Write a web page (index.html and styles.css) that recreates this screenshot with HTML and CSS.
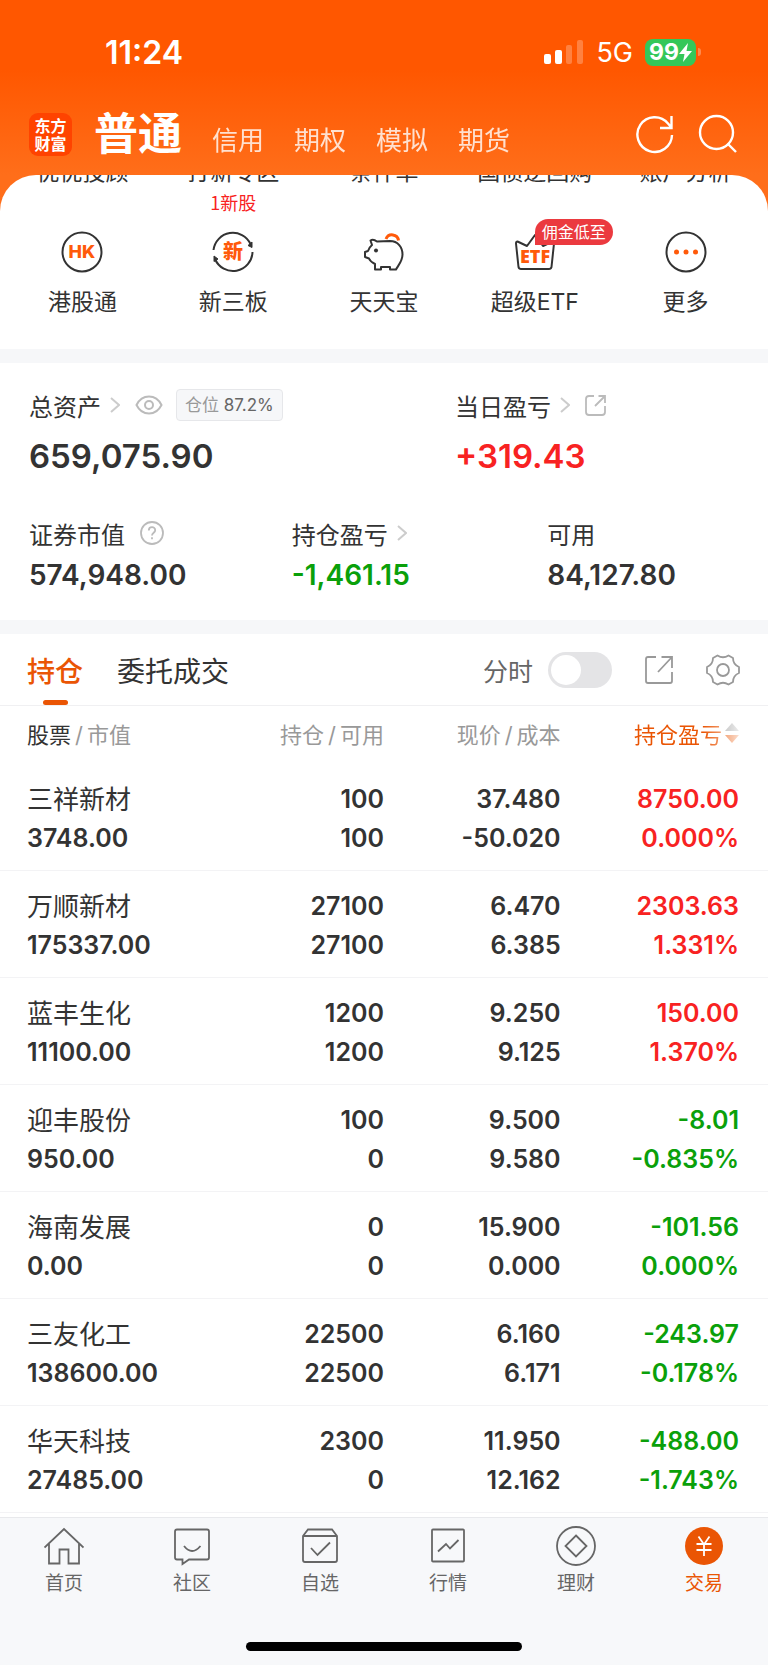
FILE: index.html
```html
<!DOCTYPE html>
<html lang="zh-CN">
<head>
  <meta charset="UTF-8" />
  <meta name="viewport" content="width=device-width, initial-scale=1.0"/>
  <title>交易 - 东方财富</title>
  <link rel="stylesheet" href="styles.css">
</head>
<body>

  <header>
    <div class="status-bar">
      <span class="time">11:24</span>
      <div class="status-icons">
        <svg width="40" height="26" viewBox="0 0 40 26" fill="#fff">
          <rect x="0" y="15" width="7" height="10" rx="2"/>
          <rect x="11" y="11" width="7" height="14" rx="2"/>
          <rect x="22" y="6" width="6" height="19" rx="2" opacity=".25"/>
          <rect x="33" y="1" width="6" height="24" rx="2" opacity=".25"/>
        </svg>
        <span class="network">5G</span>
        <span class="battery">99<svg width="13" height="19" viewBox="0 0 13 19" fill="#fff"><path d="M9 0 0 11h5.500L4 19l9-11H7.500z"/></svg></span>
      </div>
    </div>
    <div class="top-nav">
      <a href="#" class="logo">东方<br>财富</a>
      <nav class="accounts">
        <a href="#" class="active">普通</a>
        <a href="#">信用</a>
        <a href="#">期权</a>
        <a href="#">模拟</a>
        <a href="#">期货</a>
      </nav>
      <div class="top-actions">
        <button aria-label="刷新">
          <svg width="40" height="40" viewBox="0 0 40 40" fill="none" stroke="#fff" stroke-width="2.400"><path d="M37 21A17.300 17.300 0 1 1 33 9.500L36 13M36.500 2v12H25"/></svg>
        </button>
        <button aria-label="搜索">
          <svg width="40" height="40" viewBox="0 0 40 40" fill="none" stroke="#fff" stroke-width="2.400"><circle cx="18.500" cy="18.500" r="16.500"/><path d="M29.500 29.500 38 38"/></svg>
        </button>
      </div>
    </div>
  </header>

  <main>
    <section class="shortcuts">
      <div class="row clipped">
        <a href="#">优优投顾</a>
        <a href="#">打新专区</a>
        <a href="#">条件单</a>
        <a href="#">国债逆回购</a>
        <a href="#">账户分析</a>
      </div>
      <div class="row tips"><span class="new-stock">1新股</span></div>
      <div class="row entries">
        <a href="#">
          <svg width="42" height="42" viewBox="0 0 42 42"><circle cx="21" cy="21" r="19.500" fill="none" stroke="#333" stroke-width="2"/><text x="21" y="27" text-anchor="middle" class="hk">HK</text></svg>
          <span>港股通</span>
        </a>
        <a href="#">
          <svg width="42" height="42" viewBox="0 0 42 42" fill="none" stroke="#333" stroke-width="2"><path d="M1.500 19A19.500 19.500 0 0 1 38.500 13M40.500 21A19.500 19.500 0 0 1 3 28"/><path d="M40 11v5.500l-4-2zM2 30.500V25l4 3z" fill="#333" stroke-width="1"/><text x="21" y="28" text-anchor="middle" class="xin">新</text></svg>
          <span>新三板</span>
        </a>
        <a href="#">
          <svg width="42" height="42" viewBox="0 0 42 42" fill="none" stroke="#333" stroke-width="2" stroke-linejoin="round"><path d="M23 8a6.500 6.500 0 0 1 12.500 1.500" stroke="#ff5a0a" stroke-width="3"/><path d="M14 10.500C12 9 9 8.500 7.500 9.500L9 14c-2 1.500-3 3.500-4 6l-3 1v5l4 1.500c1 2.500 3 4 6 5.500v5.500h6V36h9v2.500h6c2-4 6.500-8 6.500-15S35 10 27 10z"/><circle cx="13" cy="19.500" r="2" fill="#333" stroke="none"/></svg>
          <span>天天宝</span>
        </a>
        <a href="#">
          <svg width="42" height="42" viewBox="0 0 42 42"><path d="M3.500 10.500 13 15 21 4l8 11 9.500-4.500q1.500 0 1.500 2L37.500 36q-.5 2-2.500 2H7q-2 0-2.500-2L2 12.500q0-2 1.500-2z" fill="none" stroke="#333" stroke-width="2" stroke-linejoin="round"/><text x="21" y="32" text-anchor="middle" class="etf">ETF</text></svg>
          <em class="badge">佣金低至</em>
          <span>超级ETF</span>
        </a>
        <a href="#">
          <svg width="42" height="42" viewBox="0 0 42 42"><circle cx="21" cy="21" r="19.500" fill="none" stroke="#333" stroke-width="2"/><g fill="#ff5a0a"><circle cx="11.500" cy="21" r="2.500"/><circle cx="21" cy="21" r="2.500"/><circle cx="30.500" cy="21" r="2.500"/></g></svg>
          <span>更多</span>
        </a>
      </div>
    </section>

    <section class="assets">
      <div class="total">
        <div>
          <h2>总资产
            <svg class="arrow" width="10" height="16" viewBox="0 0 10 16"><path d="m1 1 8 7-8 7"/></svg>
            <button aria-label="隐藏金额"><svg width="28" height="20" viewBox="0 0 28 20" fill="none" stroke="#bbb" stroke-width="2"><path d="M1.500 10C4 5 8.500 1.500 14 1.500S24 5 26.500 10C24 15 19.500 18.500 14 18.500S4 15 1.500 10z"/><circle cx="14" cy="10" r="4"/></svg></button>
            <span class="position">仓位 <b>87.2%</b></span>
          </h2>
          <p>659,075.90</p>
        </div>
        <div>
          <h2>当日盈亏
            <svg class="arrow" width="10" height="16" viewBox="0 0 10 16"><path d="m1 1 8 7-8 7"/></svg>
            <button aria-label="分享"><svg width="22" height="22" viewBox="0 0 22 22" fill="none" stroke="#bbb" stroke-width="1.800"><path d="M9 2H4q-3 0-3 3v13q0 3 3 3h13q3 0 3-3v-6M10 12 20 2M13.500 2H20v7"/></svg></button>
          </h2>
          <p class="up">+319.43</p>
        </div>
      </div>
      <div class="detail">
        <div>
          <h2>证券市值
            <button aria-label="说明"><svg width="24" height="24" viewBox="0 0 24 24" fill="none" stroke="#bbb" stroke-width="1.800"><circle cx="12" cy="12" r="11"/><path d="M8.800 9.500c0-4.500 6.400-4.300 6.400-.3 0 2.600-3.200 2.400-3.200 5.300M12 16.200v2"/></svg></button>
          </h2>
          <p>574,948.00</p>
        </div>
        <div>
          <h2>持仓盈亏
            <svg class="arrow" width="10" height="16" viewBox="0 0 10 16"><path d="m1 1 8 7-8 7"/></svg>
          </h2>
          <p class="down">-1,461.15</p>
        </div>
        <div>
          <h2>可用</h2>
          <p>84,127.80</p>
        </div>
      </div>
    </section>

    <section class="holdings">
      <div class="tabs">
        <button class="active">持仓</button>
        <button>委托成交</button>
        <label for="minute">分时</label>
        <input type="checkbox" id="minute" class="switch">
        <button class="tool" aria-label="分享"><svg width="30" height="30" viewBox="0 0 30 30" fill="none" stroke="#999" stroke-width="1.800"><path d="M12 2H4q-2 0-2 2v22q0 2 2 2h22q2 0 2-2v-9M14 17 28 2M17.500 2H28v11"/></svg></button>
        <button class="tool" aria-label="设置"><svg width="34" height="34" viewBox="0 0 34 34" fill="none" stroke="#999" stroke-width="1.800" stroke-linejoin="round"><path d="M11.500 2.500q5.500 3.500 11 0l4.500 2.500q0 6.500 6 9v6q-6 2.500-6 9l-4.500 2.500q-5.500-3.500-11 0L7 29q0-6.500-6-9v-6q6-2.500 6-9z"/><circle cx="17" cy="17" r="6"/></svg></button>
      </div>
      <table>
        <thead>
          <tr>
            <th><b>股票</b><i>/</i>市值</th>
            <th>持仓<i>/</i>可用</th>
            <th>现价<i>/</i>成本</th>
            <th class="sorted"><span>持仓盈亏<svg width="14" height="20" viewBox="0 0 14 20"><path d="M7 0 14 8H0z" fill="#999"/><path d="M7 20 0 12h14z" fill="#ea5504"/></svg></span></th>
          </tr>
        </thead>
        <tbody>
          <tr>
            <td><span>三祥新材</span>3748.00</td>
            <td>100<br>100</td>
            <td>37.480<br>-50.020</td>
            <td class="up">8750.00<br>0.000%</td>
          </tr>
          <tr>
            <td><span>万顺新材</span>175337.00</td>
            <td>27100<br>27100</td>
            <td>6.470<br>6.385</td>
            <td class="up">2303.63<br>1.331%</td>
          </tr>
          <tr>
            <td><span>蓝丰生化</span>11100.00</td>
            <td>1200<br>1200</td>
            <td>9.250<br>9.125</td>
            <td class="up">150.00<br>1.370%</td>
          </tr>
          <tr>
            <td><span>迎丰股份</span>950.00</td>
            <td>100<br>0</td>
            <td>9.500<br>9.580</td>
            <td class="down">-8.01<br>-0.835%</td>
          </tr>
          <tr>
            <td><span>海南发展</span>0.00</td>
            <td>0<br>0</td>
            <td>15.900<br>0.000</td>
            <td class="down">-101.56<br>0.000%</td>
          </tr>
          <tr>
            <td><span>三友化工</span>138600.00</td>
            <td>22500<br>22500</td>
            <td>6.160<br>6.171</td>
            <td class="down">-243.97<br>-0.178%</td>
          </tr>
          <tr>
            <td><span>华天科技</span>27485.00</td>
            <td>2300<br>0</td>
            <td>11.950<br>12.162</td>
            <td class="down">-488.00<br>-1.743%</td>
          </tr>
        </tbody>
      </table>
    </section>
  </main>

  <footer>
    <nav class="tab-bar">
      <a href="#">
        <svg viewBox="0 0 40 40"><path d="M.5 21.500 20 3l19.500 18.500M5 18v19.500h10.500v-14h9v14H35V18"/></svg>
        首页
      </a>
      <a href="#">
        <svg viewBox="0 0 40 40"><path d="M5 3.500h30q2 0 2 2v26q0 2-2 2H17L10.500 38v-4.500H5q-2 0-2-2v-26q0-2 2-2zM12 20q8 10 16.500 0"/></svg>
        社区
      </a>
      <a href="#">
        <svg viewBox="0 0 40 40"><path d="M8 3.500h24l5 6.500v24q0 2-2 2H5q-2 0-2-2V10zM3.500 10h33M11 22l6.500 7L30 16.500"/></svg>
        自选
      </a>
      <a href="#">
        <svg viewBox="0 0 40 40"><rect x="4" y="3.500" width="32" height="32" rx="1"/><path d="m10 25.500 8-7.500 4 4.500 8.500-8.500"/></svg>
        行情
      </a>
      <a href="#">
        <svg viewBox="0 0 40 40"><circle cx="20" cy="20" r="19"/><path d="M20 9.500 30.500 20 20 30.500 9.500 20z"/></svg>
        理财
      </a>
      <a href="#" class="active">
        <svg viewBox="0 0 40 40"><circle cx="20" cy="20" r="19"/><path d="m14.500 10.500 5.500 8 5.500-8M12.500 18h15M12.500 24h15M20 18v12"/></svg>
        交易
      </a>
    </nav>
    <div class="home-indicator"></div>
  </footer>

</body>
</html>
```
FILE: styles.css
```css
:root {
  --main-color: #ea5504;
  --text: #333;
  --gray: #999;
  --band: #f6f7f9;
  --up: #f82222;
  --down: #0aa00a;
}

* {
  box-sizing: border-box;
}

body {
  margin: 0;
  font-family: Inter, "Noto Sans CJK SC", sans-serif;
  color: var(--text);
  background: #fff;
}

a {
  color: inherit;
  text-decoration: none;
}

button {
  display: inline-flex;
  align-items: center;
  padding: 0;
  border: none;
  background: none;
  color: inherit;
  font: inherit;
  cursor: pointer;
}

svg {
  display: block;
  flex: none;
}

.up {
  color: var(--up);
}

.down {
  color: var(--down);
}

/* header */
header {
  height: 215px;
  background: linear-gradient(#ff5700 70px, #ff6e1a 175px);
  color: #fff;
}

.status-bar {
  display: flex;
  justify-content: space-between;
  align-items: center;
  height: 104px;
  padding: 0 67px 0 105px;
}

.time {
  font-size: 32px;
  font-weight: 600;
}

.status-icons {
  display: flex;
  align-items: center;
}

.network {
  margin: 0 12px;
  font-size: 27px;
}

.battery {
  position: relative;
  display: flex;
  align-items: center;
  justify-content: center;
  width: 51px;
  height: 27px;
  margin-right: 5px;
  border-radius: 8px;
  background: #34c759;
  font-size: 23px;
  font-weight: 700;
}

.battery::after {
  content: "";
  position: absolute;
  right: -5px;
  width: 3px;
  height: 8px;
  border-radius: 0 3px 3px 0;
  background: rgba(255, 255, 255, 0.3);
}

.top-nav {
  display: flex;
  align-items: center;
  height: 60px;
  padding: 0 30px 0 29px;
}

.logo {
  width: 43px;
  height: 43px;
  padding-top: 3px;
  border-radius: 9px;
  background: #ff4300;
  font-family: "Noto Sans CJK SC", sans-serif;
  font-size: 16px;
  font-weight: 700;
  line-height: 18px;
  text-align: center;
}

.accounts {
  display: flex;
  align-items: baseline;
  gap: 30px;
  margin-left: 22px;
  padding-top: 6px;
  font-size: 26px;
  line-height: 60px;
}

.accounts a {
  opacity: 0.8;
}

.accounts .active {
  opacity: 1;
  font-size: 44px;
  font-weight: 700;
}

.top-actions {
  display: flex;
  gap: 23px;
  margin-left: auto;
}

/* shortcuts */
.shortcuts {
  height: 174px;
  margin-top: -40px;
  border-radius: 36px 36px 0 0;
  background: #fff;
  overflow: hidden;
}

.row {
  display: grid;
  grid-template-columns: repeat(5, 1fr);
  padding: 0 7px;
  text-align: center;
  font-size: 23px;
}

/* scrolled half way under the header */
.clipped {
  margin-top: -18px;
  line-height: 30px;
  white-space: nowrap;
}

.tips {
  margin-top: 4px;
  color: var(--up);
  font-family: "Noto Sans CJK SC", sans-serif;
  font-size: 18px;
  line-height: 22px;
}

.new-stock {
  grid-column: 2;
}

.entries {
  margin-top: 18px;
}

.entries a {
  position: relative;
  display: flex;
  flex-direction: column;
  align-items: center;
  gap: 12px;
  line-height: 34px;
}

.hk,
.xin,
.etf {
  fill: #ff5a0a;
  stroke: none;
  font-size: 18px;
  font-weight: 800;
}

.xin {
  font-size: 20px;
}

.etf {
  font-family: "Liberation Sans Narrow", "Open Sans", sans-serif;
}

.badge {
  position: absolute;
  top: -12px;
  left: 50%;
  height: 26px;
  padding: 0 7px;
  border-radius: 13px 13px 13px 0;
  background: #eb3a3f;
  color: #fff;
  font-size: 16px;
  font-style: normal;
  line-height: 26px;
  white-space: nowrap;
}

/* assets */
.assets {
  padding: 25px 29px 26px;
  border-top: 14px solid var(--band);
  border-bottom: 14px solid var(--band);
}

.total,
.detail {
  display: grid;
  grid-template-columns: 60% 40%;
}

.detail {
  grid-template-columns: 37% 36% 27%;
  margin-top: 38px;
}

.assets h2 {
  display: flex;
  align-items: center;
  height: 34px;
  margin: 0;
  font-size: 24px;
  font-weight: 400;
}

.assets p {
  margin: 12px 0 0;
  font-size: 33px;
  font-weight: 600;
  line-height: 44px;
}

.detail p {
  margin-top: 6px;
  font-size: 28px;
  line-height: 38px;
}

.arrow {
  margin-left: 9px;
  fill: none;
  stroke: #ccc;
  stroke-width: 2;
}

.assets button {
  margin-left: 15px;
}

.position {
  margin-left: 13px;
  padding: 0 8px;
  border: 1px solid #e6e7ea;
  border-radius: 4px;
  background: var(--band);
  color: var(--gray);
  font-size: 17px;
  line-height: 30px;
}

.position b {
  color: #666;
  font-weight: 400;
}

/* holdings */
.tabs {
  display: flex;
  align-items: center;
  height: 72px;
  padding: 0 28px 0 27px;
  border-bottom: 1px solid #f0f0f2;
  font-size: 28px;
}

.tabs > button + button {
  margin-left: 34px;
}

.tabs .active {
  position: relative;
  height: 71px;
  color: var(--main-color);
  font-weight: 500;
}

.tabs .active::after {
  content: "";
  position: absolute;
  bottom: 0;
  left: 50%;
  width: 25px;
  height: 5px;
  margin-left: -12px;
  border-radius: 3px;
  background: var(--main-color);
}

.tabs label {
  margin-left: auto;
  color: #666;
  font-size: 25px;
}

.tabs .tool {
  margin-left: 32px;
}

.switch {
  appearance: none;
  width: 64px;
  height: 36px;
  margin: 0 0 0 15px;
  padding: 3px;
  border-radius: 18px;
  background: #e4e4e6;
}

.switch::before {
  content: "";
  display: block;
  width: 30px;
  height: 30px;
  border-radius: 50%;
  background: #fff;
}

table {
  width: 100%;
  margin-bottom: 4px;
  border-collapse: collapse;
  table-layout: fixed;
}

th {
  width: 23%;
  height: 57px;
  padding: 0 0 4px;
  color: var(--gray);
  font-size: 22px;
  font-weight: 400;
  text-align: right;
}

th b {
  color: var(--text);
  font-weight: 400;
}

th i {
  margin: 0 4px;
  font-style: normal;
}

th:first-child,
td:first-child {
  width: 27%;
  padding-left: 27px;
  text-align: left;
}

th:last-child,
td:last-child {
  width: 27%;
  padding-right: 29px;
}

.sorted span {
  display: flex;
  align-items: center;
  justify-content: flex-end;
  gap: 3px;
  color: var(--main-color);
  -webkit-mask-image: linear-gradient(to left, rgba(0, 0, 0, 0.2), #000 36px);
  mask-image: linear-gradient(to left, rgba(0, 0, 0, 0.2), #000 36px);
}

td {
  height: 107px;
  padding: 5px 0 0;
  border-bottom: 1px solid #f3f3f5;
  font-size: 25px;
  font-weight: 600;
  line-height: 39px;
  text-align: right;
}

td span {
  display: block;
  font-size: 26px;
  font-weight: 400;
}

/* bottom bar */
footer {
  padding-bottom: 15px;
  border-top: 1px solid #e8e9ec;
  background: #f7f8fa;
}

.tab-bar {
  display: grid;
  grid-template-columns: repeat(6, 1fr);
  padding-top: 8px;
}

.tab-bar a {
  display: flex;
  flex-direction: column;
  align-items: center;
  gap: 4px;
  color: #666;
  font-size: 19px;
  line-height: 28px;
}

.tab-bar svg {
  width: 40px;
  height: 40px;
  fill: none;
  stroke: #666;
  stroke-width: 1.8;
}

.tab-bar .active {
  color: var(--main-color);
}

.tab-bar .active circle {
  fill: var(--main-color);
  stroke: none;
}

.tab-bar .active path {
  stroke: #fff;
}

.home-indicator {
  width: 36%;
  height: 9px;
  margin: 44px auto 0;
  border-radius: 5px;
  background: #000;
}
```
